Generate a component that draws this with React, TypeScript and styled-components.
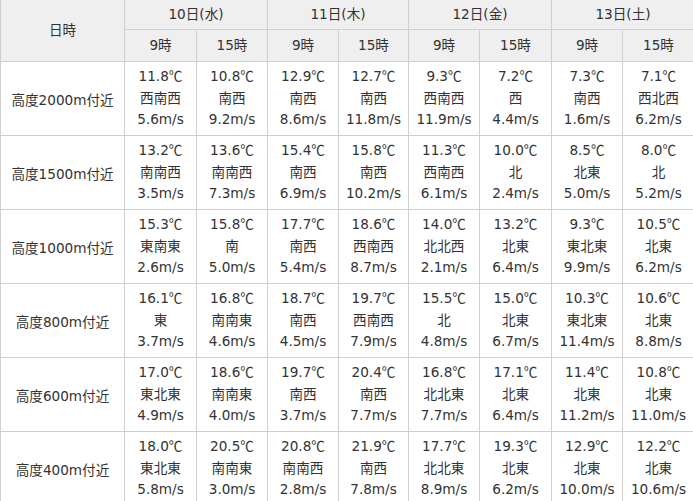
import React from "react";
import styled, { createGlobalStyle } from "styled-components";

const Global = createGlobalStyle`
  html, body { margin: 0; padding: 0; background: #fff; overflow: hidden; }
  body { font-family: "DejaVu Sans", "Noto Sans CJK JP", sans-serif; color: #333; }
`;

const Table = styled.table`
  border-collapse: collapse;
  table-layout: fixed;
  width: 694px;
  font-size: 13.6px;
  margin-top: -1px;
`;

const Col = styled.col<{ $w: number }>`
  width: ${(p) => p.$w}px;
`;

const Th = styled.th<{ $h: number }>`
  background: #efefef;
  border: 1px solid #d0d0d0;
  font-weight: normal;
  text-align: center;
  height: ${(p) => p.$h}px;
  padding: 0;
  line-height: 21px;
`;

const RowHead = styled.td`
  border: 1px solid #d0d0d0;
  text-align: center;
  padding: 0;
  height: 73px;
`;

const Cell = styled.td`
  border: 1px solid #d0d0d0;
  text-align: center;
  padding: 4px 0;
  line-height: 21.6px;
  white-space: nowrap;
`;

const Deg = styled.span`
  font-family: "Noto Sans CJK JP", sans-serif;
  line-height: 1;
`;

const days = ["10日(水)", "11日(木)", "12日(金)", "13日(土)"];

type C = [string, string, string];
const rows: { label: string; cells: C[] }[] = [
  {
    label: "高度2000m付近",
    cells: [
      ["11.8", "西南西", "5.6m/s"],
      ["10.8", "南西", "9.2m/s"],
      ["12.9", "南西", "8.6m/s"],
      ["12.7", "南西", "11.8m/s"],
      ["9.3", "西南西", "11.9m/s"],
      ["7.2", "西", "4.4m/s"],
      ["7.3", "南西", "1.6m/s"],
      ["7.1", "西北西", "6.2m/s"],
    ],
  },
  {
    label: "高度1500m付近",
    cells: [
      ["13.2", "南南西", "3.5m/s"],
      ["13.6", "南南西", "7.3m/s"],
      ["15.4", "南西", "6.9m/s"],
      ["15.8", "南西", "10.2m/s"],
      ["11.3", "西南西", "6.1m/s"],
      ["10.0", "北", "2.4m/s"],
      ["8.5", "北東", "5.0m/s"],
      ["8.0", "北", "5.2m/s"],
    ],
  },
  {
    label: "高度1000m付近",
    cells: [
      ["15.3", "東南東", "2.6m/s"],
      ["15.8", "南", "5.0m/s"],
      ["17.7", "南西", "5.4m/s"],
      ["18.6", "西南西", "8.7m/s"],
      ["14.0", "北北西", "2.1m/s"],
      ["13.2", "北東", "6.4m/s"],
      ["9.3", "東北東", "9.9m/s"],
      ["10.5", "北東", "6.2m/s"],
    ],
  },
  {
    label: "高度800m付近",
    cells: [
      ["16.1", "東", "3.7m/s"],
      ["16.8", "南南東", "4.6m/s"],
      ["18.7", "南西", "4.5m/s"],
      ["19.7", "西南西", "7.9m/s"],
      ["15.5", "北", "4.8m/s"],
      ["15.0", "北東", "6.7m/s"],
      ["10.3", "東北東", "11.4m/s"],
      ["10.6", "北東", "8.8m/s"],
    ],
  },
  {
    label: "高度600m付近",
    cells: [
      ["17.0", "東北東", "4.9m/s"],
      ["18.6", "南南東", "4.0m/s"],
      ["19.7", "南西", "3.7m/s"],
      ["20.4", "南西", "7.7m/s"],
      ["16.8", "北北東", "7.7m/s"],
      ["17.1", "北東", "6.4m/s"],
      ["11.4", "北東", "11.2m/s"],
      ["10.8", "北東", "11.0m/s"],
    ],
  },
  {
    label: "高度400m付近",
    cells: [
      ["18.0", "東北東", "5.8m/s"],
      ["20.5", "南南東", "3.0m/s"],
      ["20.8", "南南西", "2.8m/s"],
      ["21.9", "南西", "7.8m/s"],
      ["17.7", "北北東", "8.9m/s"],
      ["19.3", "北東", "6.2m/s"],
      ["12.9", "北東", "10.0m/s"],
      ["12.2", "北東", "10.6m/s"],
    ],
  },
];

const widths = [124, 72, 71, 71, 70, 71, 72, 71, 72];

export default function App() {
  return (
    <>
      <Global />
      <Table>
        <colgroup>
          {widths.map((w, i) => (
            <Col key={i} $w={w} />
          ))}
        </colgroup>
        <thead>
          <tr>
            <Th $h={29} rowSpan={2}>
              日時
            </Th>
            {days.map((d) => (
              <Th $h={29} key={d} colSpan={2}>
                {d}
              </Th>
            ))}
          </tr>
          <tr>
            {days.map((d) => (
              <React.Fragment key={d}>
                <Th $h={31}>9時</Th>
                <Th $h={31}>15時</Th>
              </React.Fragment>
            ))}
          </tr>
        </thead>
        <tbody>
          {rows.map((r) => (
            <tr key={r.label}>
              <RowHead>{r.label}</RowHead>
              {r.cells.map((c, i) => (
                <Cell key={i}>
                  {c[0]}
                  <Deg>℃</Deg>
                  <br />
                  {c[1]}
                  <br />
                  {c[2]}
                </Cell>
              ))}
            </tr>
          ))}
        </tbody>
      </Table>
    </>
  );
}
